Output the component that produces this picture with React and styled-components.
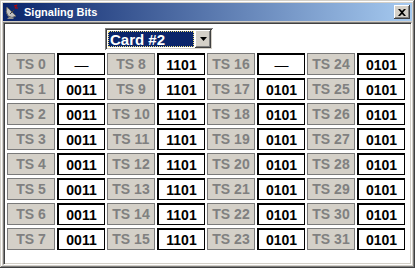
import React from 'react';
import styled, { createGlobalStyle } from 'styled-components';

const Global = createGlobalStyle`
  body {
    margin: 0;
    background: #ffffff;
    font-family: "Liberation Sans", Arial, sans-serif;
  }
`;

const Window = styled.div`
  width: 415px;
  height: 268px;
  box-sizing: border-box;
  padding: 3px;
  background: #d4d0c8;
  display: flex;
  flex-direction: column;
  box-shadow: inset -1px -1px #404040, inset 1px 1px #d4d0c8,
    inset -2px -2px #808080, inset 2px 2px #ffffff;
`;

const TitleBar = styled.div`
  height: 18px;
  flex: none;
  display: flex;
  align-items: center;
  padding: 0 2px 0 1px;
  background: linear-gradient(to right, #0a246a, #a6caf0);
  color: #ffffff;
  font-weight: bold;
  font-size: 11px;
  margin-bottom: 1px;
`;

const TitleText = styled.span`
  margin-left: 4px;
  flex: 1;
`;

const CloseButton = styled.div`
  width: 16px;
  height: 14px;
  box-sizing: border-box;
  background: #d4d0c8;
  display: flex;
  align-items: center;
  justify-content: center;
  box-shadow: inset -1px -1px #404040, inset 1px 1px #ffffff,
    inset -2px -2px #808080;
`;

const Client = styled.div`
  flex: 1;
  background: #ffffff;
  box-sizing: border-box;
  border-top: 1px solid #808080;
  border-left: 1px solid #808080;
  border-right: 1px solid #ffffff;
  border-bottom: 1px solid #ffffff;
  box-shadow: inset 1px 1px #404040, inset -1px -1px #d4d0c8;
  padding: 5px 3px 0 3px;
`;

const Toolbar = styled.div`
  display: flex;
  padding-left: 98px;
  margin-bottom: 3px;
`;

const Combo = styled.div`
  width: 108px;
  height: 22px;
  box-sizing: border-box;
  display: flex;
  padding: 2px;
  gap: 1px;
  background: #ffffff;
  box-shadow: inset 1px 1px #808080, inset -1px -1px #ffffff,
    inset 2px 2px #404040, inset -2px -2px #d4d0c8;
`;

const Selected = styled.div`
  flex: 1;
  margin: 1px 0 1px 1px;
  background: #0a246a;
  color: #ffffff;
  font-weight: bold;
  font-size: 15px;
  display: flex;
  align-items: center;
  padding-left: 2px;
  outline: 1px dotted #f0e080;
  outline-offset: -1px;
`;

const Arrow = styled.div`
  width: 16px;
  flex: none;
  background: #d4d0c8;
  display: flex;
  align-items: center;
  justify-content: center;
  box-shadow: inset -1px -1px #404040, inset 1px 1px #ffffff,
    inset -2px -2px #808080;
`;

const Grid = styled.div`
  display: grid;
  grid-template-columns: repeat(8, 48px);
  grid-auto-rows: 22px;
  column-gap: 2px;
  row-gap: 3px;
`;

const SlotButton = styled.div`
  box-sizing: border-box;
  background: #d4d0c8;
  border: 1px solid #7a7a7a;
  color: #808080;
  font-weight: bold;
  font-size: 14px;
  display: flex;
  align-items: center;
  justify-content: center;
`;

const Value = styled.div`
  box-sizing: border-box;
  background: #ffffff;
  border: 1px solid #000000;
  border-top-width: 2px;
  border-left-width: 2px;
  color: #000000;
  font-weight: ${(p) => (p.$empty ? 'normal' : 'bold')};
  font-size: 14px;
  display: flex;
  align-items: center;
  justify-content: center;
`;

const DishIcon = () => (
  <svg width="16" height="16" viewBox="0 0 16 16">
    <path d="M3 3 L12 12 Q8 15 4 12 Q1 8 3 3 Z" fill="#c0c0c0" stroke="#606060" strokeWidth="1" />
    <line x1="6" y1="10" x2="10" y2="6" stroke="#404040" strokeWidth="1" />
    <path d="M5 13 L3 15 L10 15 L8 13" fill="#909090" />
    <path d="M10 2 L13 1 L11 4 L14 4" stroke="#c00000" strokeWidth="1" fill="none" />
  </svg>
);

const valueOf = (ts) => {
  if (ts === 0 || ts === 16) return null;
  if (ts < 8) return '0011';
  if (ts < 16) return '1101';
  return '0101';
};

const App = () => {
  const cells = [];
  for (let r = 0; r < 8; r++) {
    for (let g = 0; g < 4; g++) {
      const ts = g * 8 + r;
      const v = valueOf(ts);
      cells.push(<SlotButton key={'b' + ts}>TS {ts}</SlotButton>);
      cells.push(
        <Value key={'v' + ts} $empty={!v}>
          {v || '\u2014'}
        </Value>
      );
    }
  }

  return (
    <>
      <Global />
      <Window>
        <TitleBar>
          <DishIcon />
          <TitleText>Signaling Bits</TitleText>
          <CloseButton>
            <svg width="8" height="7" viewBox="0 0 8 7">
              <path d="M0 0 L2 0 L4 2 L6 0 L8 0 L5 3.5 L8 7 L6 7 L4 5 L2 7 L0 7 L3 3.5 Z" fill="#000" />
            </svg>
          </CloseButton>
        </TitleBar>
        <Client>
          <Toolbar>
            <Combo>
              <Selected>Card #2</Selected>
              <Arrow>
                <svg width="7" height="4" viewBox="0 0 7 4">
                  <path d="M0 0 L7 0 L3.5 4 Z" fill="#000" />
                </svg>
              </Arrow>
            </Combo>
          </Toolbar>
          <Grid>{cells}</Grid>
        </Client>
      </Window>
    </>
  );
};

export default App;
